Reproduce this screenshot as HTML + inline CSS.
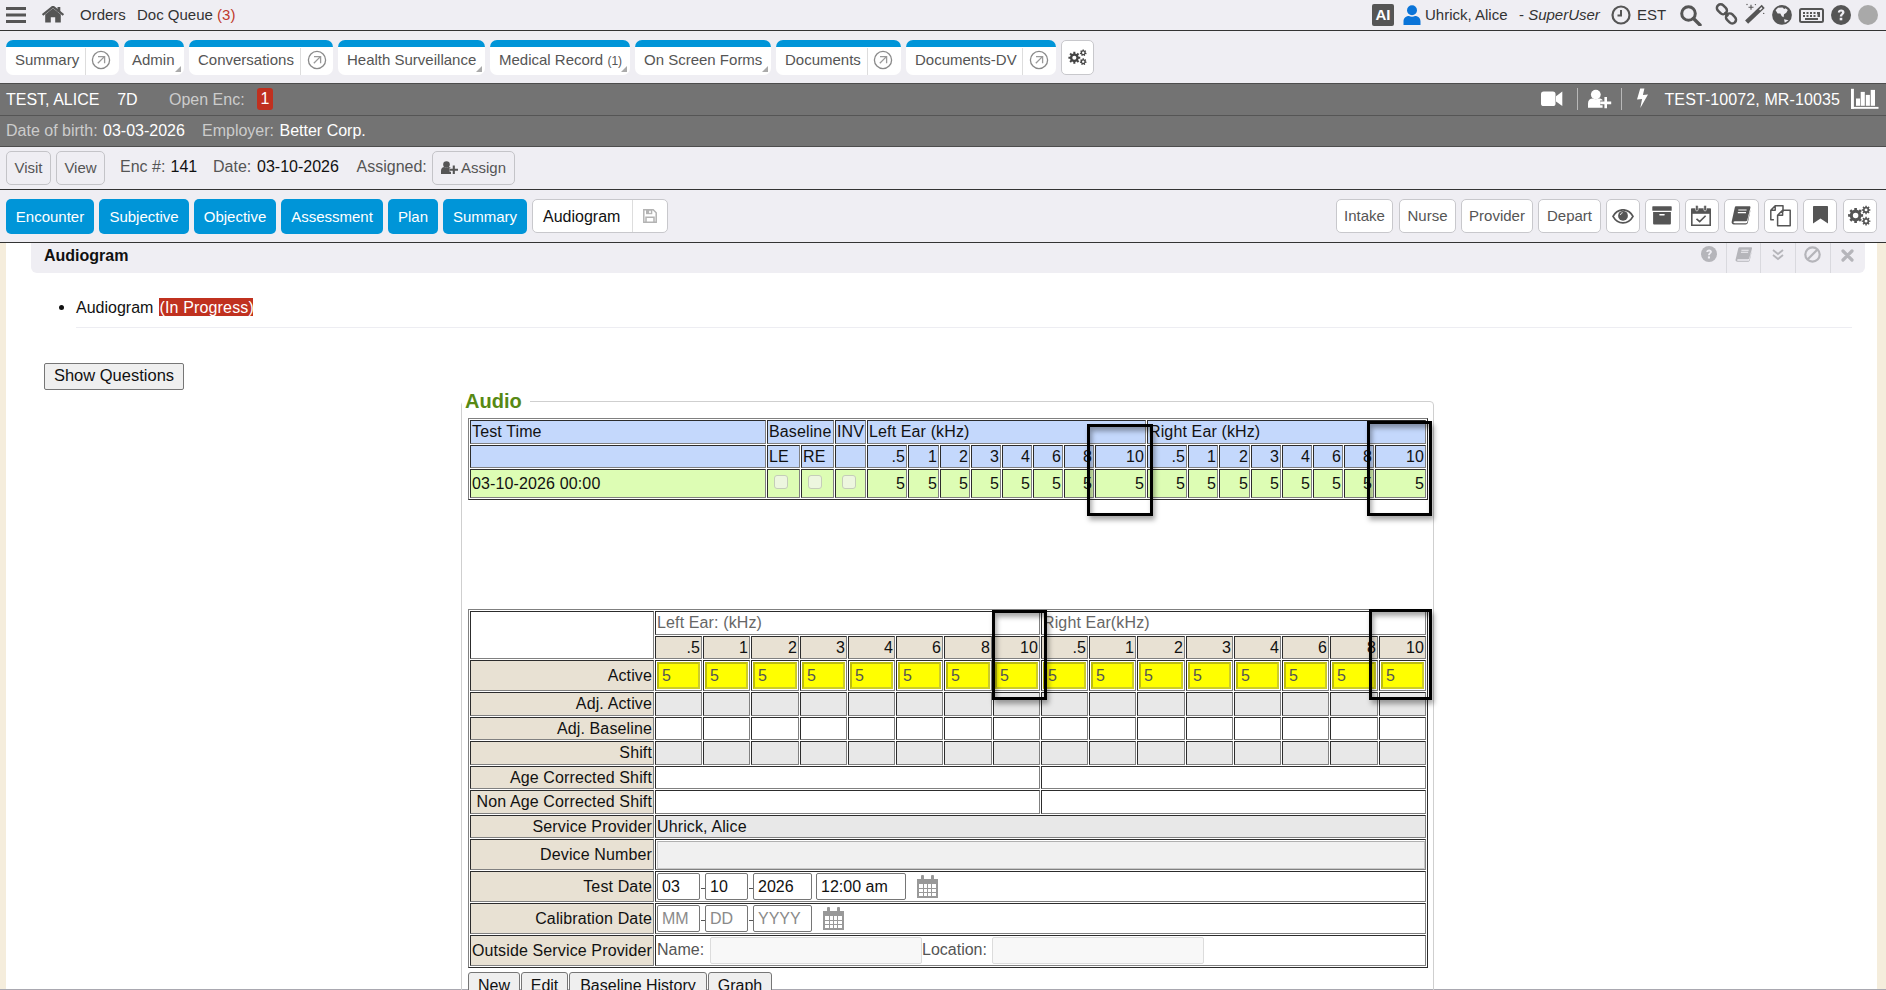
<!DOCTYPE html>
<html><head><meta charset="utf-8">
<style>
*{box-sizing:border-box}
html,body{margin:0;padding:0}
body{width:1886px;height:990px;overflow:hidden;position:relative;background:#fff;font-family:"Liberation Sans",sans-serif;color:#333}
.a{position:absolute}
svg{display:block}
#top{left:0;top:0;width:1886px;height:31px;background:#efeef3;border-bottom:1px solid #333}
.tt{font-size:15px;color:#333;white-space:nowrap;top:6px;line-height:17px}
#tabs{left:0;top:31px;width:1886px;height:52px;background:#efeef3}
.tab{top:40px;height:35px;background:#fff;border-top:7px solid #0095d8;border-radius:7px 7px 7px 7px;font-size:15px;color:#555;white-space:nowrap}
.tab .lbl{position:absolute;top:4px;line-height:17px}
.tab .dv{position:absolute;top:1px;bottom:0;width:1px;background:#ddd}
.tab .ar{position:absolute;top:6px;width:19px;height:19px;border:1.3px solid #888;border-radius:50%}
.tri{position:absolute;right:3px;bottom:3px;width:0;height:0;border-left:6px solid transparent;border-bottom:6px solid #aaa}
#pb{left:0;top:83px;width:1886px;height:64px;background:#737373;border-top:1px solid #4d4d4d;border-bottom:1px solid #4d4d4d}
#pbl{left:0;top:115px;width:1886px;height:1px;background:#555}
.pt{font-size:16px;white-space:nowrap;line-height:18px}
#vr{left:0;top:147px;width:1886px;height:43px;background:#efeef3;border-bottom:1px solid #333}
.btn{height:34px;border:1px solid #c4c4c8;border-radius:5px;background:#efeef3;font-size:15px;color:#555;text-align:center;line-height:32px;white-space:nowrap}
#nr{left:0;top:190px;width:1886px;height:53px;background:#efeef3;border-bottom:1px solid #333}
.nb{top:199px;height:35px;background:#0095d8;border-radius:5px;color:#fff;font-size:15px;text-align:center;line-height:35px;white-space:nowrap}
.gb{top:199px;height:34px;background:#fff;border:1px solid #c8c8cc;border-radius:5px;color:#555;font-size:15px;text-align:center;line-height:32px;white-space:nowrap}
</style><style>
.cl{display:flex;align-items:center;border-style:solid;border-width:1px;border-color:#2c2c2c #808080 #808080 #2c2c2c;padding:0 1px;font-size:16px;line-height:18px;white-space:nowrap;overflow:hidden;letter-spacing:0.13px}
.tb{border-style:solid;border-width:1px;border-color:#808080 #2c2c2c #2c2c2c #808080}
.cb{width:14px;height:14px;border:1px solid #c5cdb9;border-radius:3px;background:#edf6df}
.yin{background:#ff0;border:2px solid #cccc2a;border-top-color:#bcbc10;border-left-color:#bcbc10;font-size:16px;line-height:23px;color:#555;padding-left:3px}
.inp{background:#fff;border:1px solid #767676;border-radius:2px;font-size:16px;line-height:25px;padding-left:4px;white-space:nowrap}
.sbtn{height:30px;background:#efefef;border:1px solid #767676;border-radius:3px 3px 0 0;font-size:16px;line-height:25px;text-align:center;color:#111;padding-top:0}
.hb{border:3px solid #000;box-shadow:2px 4px 5px rgba(0,0,0,.35), inset 2px 4px 5px rgba(0,0,0,.35)}
</style></head><body>

<!-- TOP BAR -->
<div id="top" class="a"></div>
<svg class="a" style="left:6px;top:7px" width="20" height="16" viewBox="0 0 20 16"><rect x="0" y="0" width="20" height="3" fill="#555"/><rect x="0" y="6.5" width="20" height="3" fill="#555"/><rect x="0" y="13" width="20" height="3" fill="#555"/></svg>
<svg class="a" style="left:42px;top:6px" width="22" height="17" viewBox="0 0 22 17"><path d="M11 2.2 L3.2 8.6 V16.5 H8.8 V11.2 H13.2 V16.5 H18.8 V8.6 Z" fill="#555"/><path d="M0.6 9 L11 0.6 L21.4 9" stroke="#555" stroke-width="2.2" fill="none" stroke-linejoin="miter"/><rect x="15.5" y="1" width="2.8" height="5" fill="#555"/></svg>
<div class="a tt" style="left:80px">Orders</div>
<div class="a tt" style="left:137px">Doc Queue <span style="color:#c0392b">(3)</span></div>

<div class="a" style="left:1372px;top:4px;width:22px;height:22px;background:#555;border-radius:2px;color:#fff;font-weight:bold;font-size:15px;line-height:22px;text-align:center">AI</div>
<svg class="a" style="left:1403px;top:5px" width="18" height="20" viewBox="0 0 18 20"><circle cx="9" cy="5.2" r="5" fill="#0a74d8"/><path d="M0.5 20 V16.5 C0.5 12.5 3.5 11 6 11 C7.5 12 10.5 12 12 11 C14.5 11 17.5 12.5 17.5 16.5 V20 Z" fill="#0a74d8"/></svg>
<div class="a tt" style="left:1425px">Uhrick, Alice</div>
<div class="a tt" style="left:1519px">- <i>SuperUser</i></div>
<svg class="a" style="left:1611px;top:5px" width="20" height="20" viewBox="0 0 20 20"><circle cx="10" cy="10" r="8.5" fill="none" stroke="#555" stroke-width="2.2"/><path d="M10 5 V10.5 H6.5" fill="none" stroke="#555" stroke-width="2"/></svg>
<div class="a tt" style="left:1637px">EST</div>
<svg class="a" style="left:1680px;top:5px" width="22" height="21" viewBox="0 0 22 21"><circle cx="8.5" cy="8.5" r="6.8" fill="none" stroke="#555" stroke-width="3"/><path d="M13.5 13.5 L20 20" stroke="#555" stroke-width="3.4" stroke-linecap="round"/></svg>
<svg class="a" style="left:1716px;top:4px;overflow:visible" width="22" height="21" viewBox="0 0 22 21"><g fill="none" stroke="#555" stroke-width="2.5"><rect x="0.4" y="1.55" width="11" height="7.5" rx="3.7" transform="rotate(45 5.9 5.3)"/><rect x="9.5" y="10.65" width="11" height="7.5" rx="3.7" transform="rotate(45 15 14.4)"/></g><path d="M8.4 8.4 L12.3 12.2" stroke="#555" stroke-width="2"/></svg>
<svg class="a" style="left:1744px;top:3px" width="22" height="22" viewBox="0 0 22 22"><path d="M2.6 19.2 L19.2 3.4" stroke="#555" stroke-width="4.4" stroke-linecap="butt"/><path d="M15.6 7 L18 4.6" stroke="#efeef3" stroke-width="1.5"/><path d="M7 1.7 V6.7 M4.5 4.2 H9.5" stroke="#555" stroke-width="1.1"/><circle cx="3" cy="1.5" r="0.7" fill="#555"/><circle cx="11.4" cy="1.6" r="0.7" fill="#555"/><circle cx="19.7" cy="10.4" r="0.7" fill="#555"/></svg>
<svg class="a" style="left:1772px;top:5px" width="20" height="20" viewBox="0 0 20 20"><circle cx="10" cy="9.9" r="9.9" fill="#555"/><path d="M3.6 5.3 L6 2.7 L10.5 2.4 L12.2 3.9 L13.6 3.2 L15.8 5 L14.3 7.8 L12 9.2 L11.6 12.3 L9.8 11.2 L8.3 8.4 L5.6 8.4 Z" fill="#efeef3"/><path d="M12 14.2 L16.5 15.2 L12.8 17.8 Z" fill="#efeef3"/></svg>
<svg class="a" style="left:1799px;top:8px" width="25" height="15" viewBox="0 0 25 15"><rect x="1" y="1" width="23" height="13" rx="1.5" fill="none" stroke="#555" stroke-width="2"/><g fill="#555"><rect x="4" y="4" width="2" height="2"/><rect x="7.5" y="4" width="2" height="2"/><rect x="11" y="4" width="2" height="2"/><rect x="14.5" y="4" width="2" height="2"/><rect x="18" y="4" width="3" height="2"/><rect x="4" y="7" width="2" height="2"/><rect x="7.5" y="7" width="2" height="2"/><rect x="11" y="7" width="2" height="2"/><rect x="14.5" y="7" width="2" height="2"/><rect x="18.5" y="6" width="2.5" height="3"/><rect x="6" y="10" width="13" height="2"/></g></svg>
<svg class="a" style="left:1831px;top:5px" width="20" height="20" viewBox="0 0 20 20"><circle cx="10" cy="10" r="10" fill="#555"/><path d="M6.8 7.6 C6.8 5.6 8.3 4.5 10.2 4.5 C12.2 4.5 13.5 5.7 13.5 7.3 C13.5 9.5 11.2 9.6 11.2 11.6 H8.8 C8.8 8.7 11 8.6 11 7.4 C11 6.8 10.6 6.5 10.1 6.5 C9.5 6.5 9.1 6.9 9.1 7.6 Z" fill="#efeef3"/><rect x="8.7" y="12.8" width="2.6" height="2.5" fill="#efeef3"/></svg>
<div class="a" style="left:1858px;top:5px;width:20px;height:20px;border-radius:50%;background:#a9a9a9"></div>

<!-- TABS -->
<div id="tabs" class="a"></div>
<div class="a tab" style="left:6px;width:113px"><span class="lbl" style="left:9px">Summary</span><span class="dv" style="left:79px"></span></div>
<div class="a tab" style="left:124px;width:60px"><span class="lbl" style="left:8px">Admin</span><span class="tri"></span></div>
<div class="a tab" style="left:189px;width:144px"><span class="lbl" style="left:9px">Conversations</span><span class="dv" style="left:111px"></span></div>
<div class="a tab" style="left:338px;width:147px"><span class="lbl" style="left:9px">Health Surveillance</span><span class="tri"></span></div>
<div class="a tab" style="left:490px;width:140px"><span class="lbl" style="left:9px">Medical Record <span style="font-size:12px">(1)</span></span><span class="tri"></span></div>
<div class="a tab" style="left:635px;width:136px"><span class="lbl" style="left:9px">On Screen Forms</span><span class="tri"></span></div>
<div class="a tab" style="left:776px;width:125px"><span class="lbl" style="left:9px">Documents</span><span class="dv" style="left:91px"></span></div>
<div class="a tab" style="left:906px;width:150px"><span class="lbl" style="left:9px">Documents-DV</span><span class="dv" style="left:116px"></span></div>
<div class="a" style="left:1061px;top:40px;width:33px;height:35px;background:#fff;border:1px solid #c8c8cc;border-radius:5px"></div>

<!-- PATIENT BAR -->
<div id="pb" class="a"></div>
<div id="pbl" class="a"></div>
<div class="a pt" style="left:6px;top:91px;color:#fff">TEST, ALICE&nbsp;&nbsp;&nbsp;&nbsp;7D</div>
<div class="a pt" style="left:169px;top:91px;color:#ccc">Open Enc:</div>
<div class="a" style="left:257px;top:88px;width:16px;height:22px;background:#c0301f;border-radius:3px;color:#fff;font-size:16px;line-height:22px;text-align:center">1</div>
<div class="a pt" style="left:6px;top:122px;color:#ccc">Date of birth:</div><div class="a pt" style="left:103px;top:122px;color:#fff">03-03-2026</div><div class="a pt" style="left:202px;top:122px;color:#ccc">Employer:</div><div class="a pt" style="left:279.5px;top:122px;color:#fff">Better Corp.</div>
<div class="a pt" style="left:1664.5px;top:91px;color:#fff;letter-spacing:0.1px">TEST-10072, MR-10035</div>

<!-- VISIT ROW -->
<div id="vr" class="a"></div>
<div class="a btn" style="left:6px;top:151px;width:45px">Visit</div>
<div class="a btn" style="left:56px;top:151px;width:49px">View</div>
<div class="a pt" style="left:120px;top:158px;color:#555">Enc #:</div><div class="a pt" style="left:170.5px;top:158px;color:#111">141</div><div class="a pt" style="left:213px;top:158px;color:#555">Date:</div><div class="a pt" style="left:257px;top:158px;color:#111">03-10-2026</div><div class="a pt" style="left:356.5px;top:158px;color:#555">Assigned:</div>
<div class="a btn" style="left:432px;top:151px;width:83px;text-align:left;padding-left:28px">Assign</div>

<!-- NAV ROW -->
<div id="nr" class="a"></div>
<div class="a nb" style="left:6px;width:88px">Encounter</div>
<div class="a nb" style="left:99px;width:90px">Subjective</div>
<div class="a nb" style="left:194px;width:82px">Objective</div>
<div class="a nb" style="left:281px;width:102px">Assessment</div>
<div class="a nb" style="left:388px;width:50px">Plan</div>
<div class="a nb" style="left:443px;width:84px">Summary</div>
<div class="a gb" style="left:532px;width:136px;color:#111;text-align:left;padding-left:10px;font-size:16px;line-height:34px">Audiogram</div>
<div class="a" style="left:632px;top:200px;width:1px;height:32px;background:#ddd"></div>
<div class="a gb" style="left:1336px;width:57px">Intake</div>
<div class="a gb" style="left:1399px;width:57px">Nurse</div>
<div class="a gb" style="left:1461px;width:72px">Provider</div>
<div class="a gb" style="left:1538px;width:63px">Depart</div>
<div class="a gb" style="left:1606px;width:34px"></div>
<div class="a gb" style="left:1645px;width:35px"></div>
<div class="a gb" style="left:1685px;width:34px"></div>
<div class="a gb" style="left:1724px;width:35px"></div>
<div class="a gb" style="left:1764px;width:34px"></div>
<div class="a gb" style="left:1803px;width:34px"></div>
<div class="a gb" style="left:1843px;width:34px"></div>

<div class="a" style="left:0;top:243px;width:6px;height:747px;background:#f5eddc"></div>
<div class="a" style="left:1877px;top:243px;width:9px;height:747px;background:#f5eddc"></div>
<div class="a" style="left:0;top:989px;width:1886px;height:1px;background:#a9a8b0"></div>
<div class="a" style="left:31px;top:243px;width:1834px;height:30px;background:#efeef3;border-radius:0 0 6px 6px"></div>
<div class="a" style="left:44px;top:247px;font-size:16px;line-height:18px;font-weight:bold;color:#111;white-space:nowrap">Audiogram</div>
<div class="a" style="left:1726px;top:243px;width:1px;height:30px;background:#d9d9de"></div>
<div class="a" style="left:1760px;top:243px;width:1px;height:30px;background:#d9d9de"></div>
<div class="a" style="left:1795px;top:243px;width:1px;height:30px;background:#d9d9de"></div>
<div class="a" style="left:1830px;top:243px;width:1px;height:30px;background:#d9d9de"></div>
<svg class="a" style="left:1700.5px;top:246.3px" width="16" height="16" viewBox="0 0 16 16"><circle cx="8" cy="8" r="8" fill="#b5b5ba"/><path d="M5.3 6.1 C5.3 4.4 6.6 3.4 8.1 3.4 C9.8 3.4 10.9 4.4 10.9 5.8 C10.9 7.6 8.9 7.7 8.9 9.3 H7 C7 7 8.8 6.9 8.8 5.9 C8.8 5.4 8.5 5.2 8.1 5.2 C7.6 5.2 7.2 5.5 7.2 6.1 Z" fill="#efeef3"/><rect x="6.9" y="10.4" width="2.1" height="2.1" fill="#efeef3"/></svg>
<svg class="a" style="left:1735px;top:247px" width="17.5" height="15.2" viewBox="0 0 20 19" preserveAspectRatio="none"><path d="M5.2 0.3 H18.5 C19.3 0.3 19.6 1 19.4 1.8 L16.3 14 C16.1 14.8 15.5 15.2 14.7 15.2 H3.8 C2.6 15.2 2.2 16.2 2.6 16.8 C2.8 17.1 3.2 17.3 3.8 17.3 H14.6 C15.6 17.3 16.1 16.8 16.4 15.8 L19.5 3.8 V4.2 L16.9 16.6 C16.6 17.8 15.8 18.5 14.6 18.5 H2.9 C1.3 18.5 0.3 17.3 0.7 15.6 L3.8 1.6 C4 0.8 4.5 0.3 5.2 0.3 Z" fill="#b5b5ba"/><path d="M7.3 4 H15.6 M6.8 6.6 H15" stroke="#efeef3" stroke-width="1.2"/></svg>
<svg class="a" style="left:1772px;top:249px" width="12" height="12" viewBox="0 0 12 12"><path d="M1 1 L6 5 L11 1 M1 6 L6 10 L11 6" fill="none" stroke="#b5b5ba" stroke-width="1.8"/></svg>
<svg class="a" style="left:1804px;top:246px" width="17" height="17" viewBox="0 0 17 17"><circle cx="8.5" cy="8.5" r="7.2" fill="none" stroke="#b5b5ba" stroke-width="2.2"/><path d="M3.5 13.5 L13.5 3.5" stroke="#b5b5ba" stroke-width="2.2"/></svg>
<svg class="a" style="left:1841px;top:249px" width="13" height="13" viewBox="0 0 13 13"><path d="M2 2 L11 11 M11 2 L2 11" stroke="#b5b5ba" stroke-width="3.2" stroke-linecap="round"/></svg>
<div class="a" style="left:59px;top:305px;width:5px;height:5px;border-radius:50%;background:#111"></div>
<div class="a" style="left:76px;top:299px;font-size:16px;line-height:18px;color:#111;white-space:nowrap">Audiogram</div>
<div class="a" style="left:159px;top:298px;width:94px;height:18px;background:#c0311f;color:#fff;font-size:16px;line-height:20px;white-space:nowrap;text-align:left;letter-spacing:0.15px;padding-left:0.5px">(In Progress)</div>
<div class="a" style="left:76px;top:327px;width:1776px;height:1px;background:#ededf2"></div>
<div class="a" style="left:44px;top:363px;width:140px;height:27px;background:#efefef;border:1px solid #767676;border-radius:2px;font-size:16.5px;line-height:23px;text-align:center;color:#111;white-space:nowrap">Show Questions</div>
<div class="a" style="left:461px;top:401px;width:973px;height:620px;border:1px solid #cfcfcf;border-radius:4px"></div>
<div class="a" style="left:462px;top:386px;width:68px;height:24px;background:#fff"></div>
<div class="a" style="left:465px;top:390px;font-size:20px;line-height:23px;font-weight:bold;color:#578914;white-space:nowrap">Audio</div>
<!--TABLES-->
<svg class="a" style="left:91.4px;top:50.3px" width="20" height="20" viewBox="0 0 20 20"><circle cx="10" cy="10" r="8.6" fill="none" stroke="#8a8a8a" stroke-width="1.3"/><path d="M6.8 13.3 L13.2 6.9 M7 6.6 H13.6 V13.3" fill="none" stroke="#999" stroke-width="1.3"/></svg>
<svg class="a" style="left:306.5px;top:50.3px" width="20" height="20" viewBox="0 0 20 20"><circle cx="10" cy="10" r="8.6" fill="none" stroke="#8a8a8a" stroke-width="1.3"/><path d="M6.8 13.3 L13.2 6.9 M7 6.6 H13.6 V13.3" fill="none" stroke="#999" stroke-width="1.3"/></svg>
<svg class="a" style="left:873.3px;top:50.3px" width="20" height="20" viewBox="0 0 20 20"><circle cx="10" cy="10" r="8.6" fill="none" stroke="#8a8a8a" stroke-width="1.3"/><path d="M6.8 13.3 L13.2 6.9 M7 6.6 H13.6 V13.3" fill="none" stroke="#999" stroke-width="1.3"/></svg>
<svg class="a" style="left:1028.8px;top:50.3px" width="20" height="20" viewBox="0 0 20 20"><circle cx="10" cy="10" r="8.6" fill="none" stroke="#8a8a8a" stroke-width="1.3"/><path d="M6.8 13.3 L13.2 6.9 M7 6.6 H13.6 V13.3" fill="none" stroke="#999" stroke-width="1.3"/></svg>
<svg class="a" style="left:1068px;top:49px" width="19" height="16" viewBox="0 0 24 20.2"><path d="M6.76 5.54 L6.66 3.52 L9.34 3.52 L9.24 5.54 L10.98 6.26 L12.35 4.76 L14.24 6.65 L12.74 8.02 L13.46 9.76 L15.48 9.66 L15.48 12.34 L13.46 12.24 L12.74 13.98 L14.24 15.35 L12.35 17.24 L10.98 15.74 L9.24 16.46 L9.34 18.48 L6.66 18.48 L6.76 16.46 L5.02 15.74 L3.65 17.24 L1.76 15.35 L3.26 13.98 L2.54 12.24 L0.52 12.34 L0.52 9.66 L2.54 9.76 L3.26 8.02 L1.76 6.65 L3.65 4.76 L5.02 6.26 Z M10.60 11.00 A2.6 2.6 0 1 0 5.40 11.00 A2.6 2.6 0 1 0 10.60 11.00 Z M18.39 1.70 L18.34 0.59 L20.06 0.59 L20.01 1.70 L21.12 2.24 L21.96 1.50 L23.03 2.85 L22.13 3.50 L22.40 4.70 L23.50 4.90 L23.12 6.58 L22.04 6.28 L21.27 7.24 L21.80 8.22 L20.25 8.97 L19.81 7.94 L18.59 7.94 L18.15 8.97 L16.60 8.22 L17.13 7.24 L16.36 6.28 L15.28 6.58 L14.90 4.90 L16.00 4.70 L16.27 3.50 L15.37 2.85 L16.44 1.50 L17.28 2.24 Z M20.70 4.80 A1.5 1.5 0 1 0 17.70 4.80 A1.5 1.5 0 1 0 20.70 4.80 Z M18.39 12.90 L18.34 11.79 L20.06 11.79 L20.01 12.90 L21.12 13.44 L21.96 12.70 L23.03 14.05 L22.13 14.70 L22.40 15.90 L23.50 16.10 L23.12 17.78 L22.04 17.48 L21.27 18.44 L21.80 19.42 L20.25 20.17 L19.81 19.14 L18.59 19.14 L18.15 20.17 L16.60 19.42 L17.13 18.44 L16.36 17.48 L15.28 17.78 L14.90 16.10 L16.00 15.90 L16.27 14.70 L15.37 14.05 L16.44 12.70 L17.28 13.44 Z M20.70 16.00 A1.5 1.5 0 1 0 17.70 16.00 A1.5 1.5 0 1 0 20.70 16.00 Z" fill="#444" fill-rule="evenodd"/></svg>
<svg class="a" style="left:1541px;top:91px" width="22" height="16" viewBox="0 0 22 16"><rect x="0" y="0.4" width="14.5" height="14.6" rx="2.6" fill="#fff"/><path d="M15 5.2 L21.3 0.6 V15 L15 10.4 Z" fill="#fff"/></svg>
<div class="a" style="left:1577px;top:88px;width:1px;height:22px;background:#b8b8b8"></div>
<div class="a" style="left:1621px;top:88px;width:1px;height:22px;background:#b8b8b8"></div>
<svg class="a" style="left:1587px;top:89px" width="25" height="20" viewBox="0 0 25 20"><circle cx="8.8" cy="5.6" r="4.9" fill="#fff"/><path d="M1 18.8 V14.5 C1 11.5 3 9.6 5.5 9.6 C7.5 10.6 10 10.6 12.2 9.6 C13.6 9.6 14.8 10.2 15.6 11 V18.8 Z" fill="#fff"/><path d="M13.2 13.9 H24.2 M18.7 8.1 V19.2" stroke="#737373" stroke-width="4.8"/><path d="M13.2 13.9 H24.2 M18.7 8.1 V19.2" stroke="#fff" stroke-width="2.6"/></svg>
<svg class="a" style="left:1636px;top:88px" width="13" height="21" viewBox="0 0 13 21"><path d="M4.2 0.4 H8.4 L6.9 6.9 L12 6.5 L4.3 20 L6.1 11 L1 11.4 Z" fill="#fff"/></svg>
<svg class="a" style="left:1851px;top:88px" width="28" height="21" viewBox="0 0 28 21"><g fill="#fff"><rect x="0" y="0.8" width="2.9" height="20"/><rect x="0" y="18.9" width="27.5" height="1.9"/><rect x="5" y="10.5" width="4.1" height="7.3"/><rect x="9.7" y="3.9" width="4.1" height="13.9"/><rect x="14.8" y="6.9" width="4.1" height="10.9"/><rect x="19.7" y="1.9" width="4.3" height="15.9"/></g></svg>
<svg class="a" style="left:440px;top:160px" width="19" height="15" viewBox="0 0 19 15"><circle cx="6.5" cy="4.5" r="3.3" fill="#555"/><path d="M1 14 V10.8 C1 8.6 2.5 7 4.3 7 C5.6 7.8 7.4 7.8 8.7 7 C9.6 7 10.4 7.4 11 8 V14 Z" fill="#555"/><path d="M9.6 9.7 H18 M13.8 5.6 V14" stroke="#efeef3" stroke-width="4"/><path d="M9.6 9.7 H18 M13.8 5.6 V14" stroke="#555" stroke-width="2.1"/></svg>
<svg class="a" style="left:643px;top:209px" width="14" height="14" viewBox="0 0 14 14"><path d="M0.8 0.8 H10.2 L13.2 3.8 V13.2 H0.8 Z" fill="none" stroke="#b3b3b3" stroke-width="1.5"/><rect x="3" y="0.8" width="6.3" height="4.4" fill="#b3b3b3"/><rect x="6.2" y="1.8" width="1.6" height="2.3" fill="#fff"/><path d="M3 13 V8.3 H11 V13" fill="none" stroke="#b3b3b3" stroke-width="1.5"/></svg>
<svg class="a" style="left:1612px;top:209px" width="22" height="15" viewBox="0 0 22 15"><path d="M1 7.3 C3.5 2.8 7 0.8 11 0.8 C15 0.8 18.5 2.8 21 7.3 C18.5 11.8 15 13.8 11 13.8 C7 13.8 3.5 11.8 1 7.3 Z" fill="none" stroke="#555" stroke-width="1.7"/><circle cx="11" cy="6.8" r="4.9" fill="#555"/><path d="M8.5 6 C8.6 4.8 9.4 3.9 10.6 3.7" stroke="#fff" stroke-width="1" fill="none"/></svg>
<svg class="a" style="left:1652px;top:206px" width="20" height="19" viewBox="0 0 20 19"><rect x="0.3" y="0.3" width="19.4" height="4.5" rx="0.6" fill="#555"/><path d="M1.1 6 H18.9 V17.6 C18.9 18.2 18.5 18.5 18 18.5 H2 C1.5 18.5 1.1 18.2 1.1 17.6 Z" fill="#555"/><rect x="7.2" y="8" width="5.6" height="1.6" rx="0.8" fill="#fff"/></svg>
<svg class="a" style="left:1691px;top:205px" width="20" height="21" viewBox="0 0 20 21"><path d="M0.8 4.2 H19.2 V20.2 H0.8 Z" fill="none" stroke="#555" stroke-width="1.6"/><rect x="0.8" y="3.6" width="18.4" height="5.2" fill="#555"/><rect x="4.6" y="0.3" width="2.6" height="5.6" rx="1.3" fill="#555" stroke="#fff" stroke-width="0.6"/><rect x="12.8" y="0.3" width="2.6" height="5.6" rx="1.3" fill="#555" stroke="#fff" stroke-width="0.6"/><path d="M5.5 13.8 L8.7 16.6 L14.6 10.8" fill="none" stroke="#555" stroke-width="1.6"/></svg>
<svg class="a" style="left:1731px;top:206px" width="20" height="19" viewBox="0 0 20 19"><path d="M5.2 0.3 H18.5 C19.3 0.3 19.6 1 19.4 1.8 L16.3 14 C16.1 14.8 15.5 15.2 14.7 15.2 H3.8 C2.6 15.2 2.2 16.2 2.6 16.8 C2.8 17.1 3.2 17.3 3.8 17.3 H14.6 C15.6 17.3 16.1 16.8 16.4 15.8 L19.5 3.8 V4.2 L16.9 16.6 C16.6 17.8 15.8 18.5 14.6 18.5 H2.9 C1.3 18.5 0.3 17.3 0.7 15.6 L3.8 1.6 C4 0.8 4.5 0.3 5.2 0.3 Z" fill="#555"/><path d="M7.3 4 H15.6 M6.8 6.6 H15" stroke="#fff" stroke-width="1.1"/></svg>
<svg class="a" style="left:1770px;top:205px" width="22" height="22" viewBox="0 0 22 22"><path d="M5.2 0.8 H13 V6.7 M3.9 14.8 H0.8 V5.3 L5.2 0.8 V5.3 H0.8" fill="none" stroke="#555" stroke-width="1.5" stroke-linejoin="round"/><path d="M12.6 5.3 H20.2 V20.7 H7.6 V10.2 L12.6 5.3 V10.2 H7.6" fill="none" stroke="#555" stroke-width="1.5" stroke-linejoin="round"/></svg>
<svg class="a" style="left:1813px;top:206px" width="15" height="18" viewBox="0 0 15 18"><path d="M0 1 C0 0.4 0.4 0 1 0 H14 C14.6 0 15 0.4 15 1 V17.6 L7.5 12.6 L0 17.6 Z" fill="#555"/></svg>
<svg class="a" style="left:1848px;top:205px" width="23" height="21" viewBox="0 0 24.200 22.096"><path d="M6.62 4.95 L6.59 3.12 L9.41 3.12 L9.38 4.95 L11.30 5.75 L12.57 4.44 L14.56 6.43 L13.25 7.70 L14.05 9.62 L15.88 9.59 L15.88 12.41 L14.05 12.38 L13.25 14.30 L14.56 15.57 L12.57 17.56 L11.30 16.25 L9.38 17.05 L9.41 18.88 L6.59 18.88 L6.62 17.05 L4.70 16.25 L3.43 17.56 L1.44 15.57 L2.75 14.30 L1.95 12.38 L0.12 12.41 L0.12 9.59 L1.95 9.62 L2.75 7.70 L1.44 6.43 L3.43 4.44 L4.70 5.75 Z M10.90 11.00 A2.9 2.9 0 1 0 5.10 11.00 A2.9 2.9 0 1 0 10.90 11.00 Z M18.25 1.88 L18.19 0.67 L19.81 0.67 L19.75 1.88 L20.81 2.32 L21.63 1.43 L22.77 2.57 L21.88 3.39 L22.32 4.45 L23.53 4.39 L23.53 6.01 L22.32 5.95 L21.88 7.01 L22.77 7.83 L21.63 8.97 L20.81 8.08 L19.75 8.52 L19.81 9.73 L18.19 9.73 L18.25 8.52 L17.19 8.08 L16.37 8.97 L15.23 7.83 L16.12 7.01 L15.68 5.95 L14.47 6.01 L14.47 4.39 L15.68 4.45 L16.12 3.39 L15.23 2.57 L16.37 1.43 L17.19 2.32 Z M20.50 5.20 A1.5 1.5 0 1 0 17.50 5.20 A1.5 1.5 0 1 0 20.50 5.20 Z M18.25 13.68 L18.19 12.47 L19.81 12.47 L19.75 13.68 L20.81 14.12 L21.63 13.23 L22.77 14.37 L21.88 15.19 L22.32 16.25 L23.53 16.19 L23.53 17.81 L22.32 17.75 L21.88 18.81 L22.77 19.63 L21.63 20.77 L20.81 19.88 L19.75 20.32 L19.81 21.53 L18.19 21.53 L18.25 20.32 L17.19 19.88 L16.37 20.77 L15.23 19.63 L16.12 18.81 L15.68 17.75 L14.47 17.81 L14.47 16.19 L15.68 16.25 L16.12 15.19 L15.23 14.37 L16.37 13.23 L17.19 14.12 Z M20.50 17.00 A1.5 1.5 0 1 0 17.50 17.00 A1.5 1.5 0 1 0 20.50 17.00 Z" fill="#555" fill-rule="evenodd"/></svg>
<div class="a tb" style="left:468px;top:418px;width:960px;height:82px"></div>
<div class="a cl" style="left:470px;top:420px;width:296px;height:24px;background:#c4d8fc;justify-content:flex-start;color:#111;">Test Time</div>
<div class="a cl" style="left:767px;top:420px;width:67px;height:24px;background:#c4d8fc;justify-content:flex-start;color:#111;">Baseline</div>
<div class="a cl" style="left:835px;top:420px;width:31px;height:24px;background:#c4d8fc;justify-content:flex-start;color:#111;">INV</div>
<div class="a cl" style="left:867px;top:420px;width:279px;height:24px;background:#c4d8fc;justify-content:flex-start;color:#111;">Left Ear (kHz)</div>
<div class="a cl" style="left:1147px;top:420px;width:279px;height:24px;background:#c4d8fc;justify-content:flex-start;color:#111;">Right Ear (kHz)</div>
<div class="a cl" style="left:470px;top:445px;width:296px;height:23px;background:#c4d8fc;justify-content:flex-start;color:#111;"></div>
<div class="a cl" style="left:767px;top:445px;width:33px;height:23px;background:#c4d8fc;justify-content:flex-start;color:#111;">LE</div>
<div class="a cl" style="left:801px;top:445px;width:33px;height:23px;background:#c4d8fc;justify-content:flex-start;color:#111;">RE</div>
<div class="a cl" style="left:835px;top:445px;width:31px;height:23px;background:#c4d8fc;justify-content:flex-start;color:#111;"></div>
<div class="a cl" style="left:867px;top:445px;width:40px;height:23px;background:#c4d8fc;justify-content:flex-end;color:#111;">.5</div>
<div class="a cl" style="left:908px;top:445px;width:31px;height:23px;background:#c4d8fc;justify-content:flex-end;color:#111;">1</div>
<div class="a cl" style="left:940px;top:445px;width:30px;height:23px;background:#c4d8fc;justify-content:flex-end;color:#111;">2</div>
<div class="a cl" style="left:971px;top:445px;width:30px;height:23px;background:#c4d8fc;justify-content:flex-end;color:#111;">3</div>
<div class="a cl" style="left:1002px;top:445px;width:30px;height:23px;background:#c4d8fc;justify-content:flex-end;color:#111;">4</div>
<div class="a cl" style="left:1033px;top:445px;width:30px;height:23px;background:#c4d8fc;justify-content:flex-end;color:#111;">6</div>
<div class="a cl" style="left:1064px;top:445px;width:30px;height:23px;background:#c4d8fc;justify-content:flex-end;color:#111;">8</div>
<div class="a cl" style="left:1095px;top:445px;width:51px;height:23px;background:#c4d8fc;justify-content:flex-end;color:#111;">10</div>
<div class="a cl" style="left:1147px;top:445px;width:40px;height:23px;background:#c4d8fc;justify-content:flex-end;color:#111;">.5</div>
<div class="a cl" style="left:1188px;top:445px;width:30px;height:23px;background:#c4d8fc;justify-content:flex-end;color:#111;">1</div>
<div class="a cl" style="left:1219px;top:445px;width:31px;height:23px;background:#c4d8fc;justify-content:flex-end;color:#111;">2</div>
<div class="a cl" style="left:1251px;top:445px;width:30px;height:23px;background:#c4d8fc;justify-content:flex-end;color:#111;">3</div>
<div class="a cl" style="left:1282px;top:445px;width:30px;height:23px;background:#c4d8fc;justify-content:flex-end;color:#111;">4</div>
<div class="a cl" style="left:1313px;top:445px;width:30px;height:23px;background:#c4d8fc;justify-content:flex-end;color:#111;">6</div>
<div class="a cl" style="left:1344px;top:445px;width:30px;height:23px;background:#c4d8fc;justify-content:flex-end;color:#111;">8</div>
<div class="a cl" style="left:1375px;top:445px;width:51px;height:23px;background:#c4d8fc;justify-content:flex-end;color:#111;">10</div>
<div class="a cl" style="left:470px;top:469px;width:296px;height:29px;background:#ddfdb4;justify-content:flex-start;color:#111;">03-10-2026 00:00</div>
<div class="a cl" style="left:767px;top:469px;width:33px;height:29px;background:#ddfdb4;justify-content:flex-start;color:#111;"></div>
<div class="a cb" style="left:774px;top:475px"></div>
<div class="a cl" style="left:801px;top:469px;width:33px;height:29px;background:#ddfdb4;justify-content:flex-start;color:#111;"></div>
<div class="a cb" style="left:808px;top:475px"></div>
<div class="a cl" style="left:835px;top:469px;width:31px;height:29px;background:#ddfdb4;justify-content:flex-start;color:#111;"></div>
<div class="a cb" style="left:842px;top:475px"></div>
<div class="a cl" style="left:867px;top:469px;width:40px;height:29px;background:#ddfdb4;justify-content:flex-end;color:#111;">5</div>
<div class="a cl" style="left:908px;top:469px;width:31px;height:29px;background:#ddfdb4;justify-content:flex-end;color:#111;">5</div>
<div class="a cl" style="left:940px;top:469px;width:30px;height:29px;background:#ddfdb4;justify-content:flex-end;color:#111;">5</div>
<div class="a cl" style="left:971px;top:469px;width:30px;height:29px;background:#ddfdb4;justify-content:flex-end;color:#111;">5</div>
<div class="a cl" style="left:1002px;top:469px;width:30px;height:29px;background:#ddfdb4;justify-content:flex-end;color:#111;">5</div>
<div class="a cl" style="left:1033px;top:469px;width:30px;height:29px;background:#ddfdb4;justify-content:flex-end;color:#111;">5</div>
<div class="a cl" style="left:1064px;top:469px;width:30px;height:29px;background:#ddfdb4;justify-content:flex-end;color:#111;">5</div>
<div class="a cl" style="left:1095px;top:469px;width:51px;height:29px;background:#ddfdb4;justify-content:flex-end;color:#111;">5</div>
<div class="a cl" style="left:1147px;top:469px;width:40px;height:29px;background:#ddfdb4;justify-content:flex-end;color:#111;">5</div>
<div class="a cl" style="left:1188px;top:469px;width:30px;height:29px;background:#ddfdb4;justify-content:flex-end;color:#111;">5</div>
<div class="a cl" style="left:1219px;top:469px;width:31px;height:29px;background:#ddfdb4;justify-content:flex-end;color:#111;">5</div>
<div class="a cl" style="left:1251px;top:469px;width:30px;height:29px;background:#ddfdb4;justify-content:flex-end;color:#111;">5</div>
<div class="a cl" style="left:1282px;top:469px;width:30px;height:29px;background:#ddfdb4;justify-content:flex-end;color:#111;">5</div>
<div class="a cl" style="left:1313px;top:469px;width:30px;height:29px;background:#ddfdb4;justify-content:flex-end;color:#111;">5</div>
<div class="a cl" style="left:1344px;top:469px;width:30px;height:29px;background:#ddfdb4;justify-content:flex-end;color:#111;">5</div>
<div class="a cl" style="left:1375px;top:469px;width:51px;height:29px;background:#ddfdb4;justify-content:flex-end;color:#111;">5</div>
<div class="a tb" style="left:468px;top:609px;width:960px;height:359px"></div>
<div class="a cl" style="left:470px;top:611px;width:184px;height:48px;background:#fff;justify-content:flex-start;color:#111;"></div>
<div class="a cl" style="left:655px;top:611px;width:385px;height:24px;background:#fff;justify-content:flex-start;color:#666;">Left Ear: (kHz)</div>
<div class="a cl" style="left:1041px;top:611px;width:385px;height:24px;background:#fff;justify-content:flex-start;color:#666;">Right Ear(kHz)</div>
<div class="a cl" style="left:655px;top:636px;width:47px;height:23px;background:#e8e1d3;justify-content:flex-end;color:#111;">.5</div>
<div class="a cl" style="left:703px;top:636px;width:47px;height:23px;background:#e8e1d3;justify-content:flex-end;color:#111;">1</div>
<div class="a cl" style="left:751px;top:636px;width:48px;height:23px;background:#e8e1d3;justify-content:flex-end;color:#111;">2</div>
<div class="a cl" style="left:800px;top:636px;width:47px;height:23px;background:#e8e1d3;justify-content:flex-end;color:#111;">3</div>
<div class="a cl" style="left:848px;top:636px;width:47px;height:23px;background:#e8e1d3;justify-content:flex-end;color:#111;">4</div>
<div class="a cl" style="left:896px;top:636px;width:47px;height:23px;background:#e8e1d3;justify-content:flex-end;color:#111;">6</div>
<div class="a cl" style="left:944px;top:636px;width:48px;height:23px;background:#e8e1d3;justify-content:flex-end;color:#111;">8</div>
<div class="a cl" style="left:993px;top:636px;width:47px;height:23px;background:#e8e1d3;justify-content:flex-end;color:#111;">10</div>
<div class="a cl" style="left:1041px;top:636px;width:47px;height:23px;background:#e8e1d3;justify-content:flex-end;color:#111;">.5</div>
<div class="a cl" style="left:1089px;top:636px;width:47px;height:23px;background:#e8e1d3;justify-content:flex-end;color:#111;">1</div>
<div class="a cl" style="left:1137px;top:636px;width:48px;height:23px;background:#e8e1d3;justify-content:flex-end;color:#111;">2</div>
<div class="a cl" style="left:1186px;top:636px;width:47px;height:23px;background:#e8e1d3;justify-content:flex-end;color:#111;">3</div>
<div class="a cl" style="left:1234px;top:636px;width:47px;height:23px;background:#e8e1d3;justify-content:flex-end;color:#111;">4</div>
<div class="a cl" style="left:1282px;top:636px;width:47px;height:23px;background:#e8e1d3;justify-content:flex-end;color:#111;">6</div>
<div class="a cl" style="left:1330px;top:636px;width:48px;height:23px;background:#e8e1d3;justify-content:flex-end;color:#111;">8</div>
<div class="a cl" style="left:1379px;top:636px;width:47px;height:23px;background:#e8e1d3;justify-content:flex-end;color:#111;">10</div>
<div class="a cl" style="left:470px;top:660px;width:184px;height:31px;background:#e8e1d3;justify-content:flex-end;color:#111;">Active</div>
<div class="a cl" style="left:470px;top:692px;width:184px;height:24px;background:#e8e1d3;justify-content:flex-end;color:#111;">Adj. Active</div>
<div class="a cl" style="left:470px;top:717px;width:184px;height:23px;background:#e8e1d3;justify-content:flex-end;color:#111;">Adj. Baseline</div>
<div class="a cl" style="left:470px;top:741px;width:184px;height:24px;background:#e8e1d3;justify-content:flex-end;color:#111;">Shift</div>
<div class="a cl" style="left:470px;top:766px;width:184px;height:23px;background:#e8e1d3;justify-content:flex-end;color:#111;">Age Corrected Shift</div>
<div class="a cl" style="left:470px;top:790px;width:184px;height:24px;background:#e8e1d3;justify-content:flex-end;color:#111;">Non Age Corrected Shift</div>
<div class="a cl" style="left:470px;top:815px;width:184px;height:23px;background:#e8e1d3;justify-content:flex-end;color:#111;">Service Provider</div>
<div class="a cl" style="left:470px;top:839px;width:184px;height:31px;background:#e8e1d3;justify-content:flex-end;color:#111;">Device Number</div>
<div class="a cl" style="left:470px;top:871px;width:184px;height:31px;background:#e8e1d3;justify-content:flex-end;color:#111;">Test Date</div>
<div class="a cl" style="left:470px;top:903px;width:184px;height:31px;background:#e8e1d3;justify-content:flex-end;color:#111;">Calibration Date</div>
<div class="a cl" style="left:470px;top:935px;width:184px;height:31px;background:#e8e1d3;justify-content:flex-end;color:#111;">Outside Service Provider</div>
<div class="a cl" style="left:655px;top:660px;width:47px;height:31px;background:#fff;justify-content:flex-start;color:#111;"></div>
<div class="a yin" style="left:657px;top:662px;width:43px;height:27px">5</div>
<div class="a cl" style="left:655px;top:692px;width:47px;height:24px;background:#e8e8e8;justify-content:flex-start;color:#111;"></div>
<div class="a cl" style="left:655px;top:717px;width:47px;height:23px;background:#fff;justify-content:flex-start;color:#111;"></div>
<div class="a cl" style="left:655px;top:741px;width:47px;height:24px;background:#e8e8e8;justify-content:flex-start;color:#111;"></div>
<div class="a cl" style="left:703px;top:660px;width:47px;height:31px;background:#fff;justify-content:flex-start;color:#111;"></div>
<div class="a yin" style="left:705px;top:662px;width:43px;height:27px">5</div>
<div class="a cl" style="left:703px;top:692px;width:47px;height:24px;background:#e8e8e8;justify-content:flex-start;color:#111;"></div>
<div class="a cl" style="left:703px;top:717px;width:47px;height:23px;background:#fff;justify-content:flex-start;color:#111;"></div>
<div class="a cl" style="left:703px;top:741px;width:47px;height:24px;background:#e8e8e8;justify-content:flex-start;color:#111;"></div>
<div class="a cl" style="left:751px;top:660px;width:48px;height:31px;background:#fff;justify-content:flex-start;color:#111;"></div>
<div class="a yin" style="left:753px;top:662px;width:44px;height:27px">5</div>
<div class="a cl" style="left:751px;top:692px;width:48px;height:24px;background:#e8e8e8;justify-content:flex-start;color:#111;"></div>
<div class="a cl" style="left:751px;top:717px;width:48px;height:23px;background:#fff;justify-content:flex-start;color:#111;"></div>
<div class="a cl" style="left:751px;top:741px;width:48px;height:24px;background:#e8e8e8;justify-content:flex-start;color:#111;"></div>
<div class="a cl" style="left:800px;top:660px;width:47px;height:31px;background:#fff;justify-content:flex-start;color:#111;"></div>
<div class="a yin" style="left:802px;top:662px;width:43px;height:27px">5</div>
<div class="a cl" style="left:800px;top:692px;width:47px;height:24px;background:#e8e8e8;justify-content:flex-start;color:#111;"></div>
<div class="a cl" style="left:800px;top:717px;width:47px;height:23px;background:#fff;justify-content:flex-start;color:#111;"></div>
<div class="a cl" style="left:800px;top:741px;width:47px;height:24px;background:#e8e8e8;justify-content:flex-start;color:#111;"></div>
<div class="a cl" style="left:848px;top:660px;width:47px;height:31px;background:#fff;justify-content:flex-start;color:#111;"></div>
<div class="a yin" style="left:850px;top:662px;width:43px;height:27px">5</div>
<div class="a cl" style="left:848px;top:692px;width:47px;height:24px;background:#e8e8e8;justify-content:flex-start;color:#111;"></div>
<div class="a cl" style="left:848px;top:717px;width:47px;height:23px;background:#fff;justify-content:flex-start;color:#111;"></div>
<div class="a cl" style="left:848px;top:741px;width:47px;height:24px;background:#e8e8e8;justify-content:flex-start;color:#111;"></div>
<div class="a cl" style="left:896px;top:660px;width:47px;height:31px;background:#fff;justify-content:flex-start;color:#111;"></div>
<div class="a yin" style="left:898px;top:662px;width:43px;height:27px">5</div>
<div class="a cl" style="left:896px;top:692px;width:47px;height:24px;background:#e8e8e8;justify-content:flex-start;color:#111;"></div>
<div class="a cl" style="left:896px;top:717px;width:47px;height:23px;background:#fff;justify-content:flex-start;color:#111;"></div>
<div class="a cl" style="left:896px;top:741px;width:47px;height:24px;background:#e8e8e8;justify-content:flex-start;color:#111;"></div>
<div class="a cl" style="left:944px;top:660px;width:48px;height:31px;background:#fff;justify-content:flex-start;color:#111;"></div>
<div class="a yin" style="left:946px;top:662px;width:44px;height:27px">5</div>
<div class="a cl" style="left:944px;top:692px;width:48px;height:24px;background:#e8e8e8;justify-content:flex-start;color:#111;"></div>
<div class="a cl" style="left:944px;top:717px;width:48px;height:23px;background:#fff;justify-content:flex-start;color:#111;"></div>
<div class="a cl" style="left:944px;top:741px;width:48px;height:24px;background:#e8e8e8;justify-content:flex-start;color:#111;"></div>
<div class="a cl" style="left:993px;top:660px;width:47px;height:31px;background:#fff;justify-content:flex-start;color:#111;"></div>
<div class="a yin" style="left:995px;top:662px;width:43px;height:27px">5</div>
<div class="a cl" style="left:993px;top:692px;width:47px;height:24px;background:#e8e8e8;justify-content:flex-start;color:#111;"></div>
<div class="a cl" style="left:993px;top:717px;width:47px;height:23px;background:#fff;justify-content:flex-start;color:#111;"></div>
<div class="a cl" style="left:993px;top:741px;width:47px;height:24px;background:#e8e8e8;justify-content:flex-start;color:#111;"></div>
<div class="a cl" style="left:1041px;top:660px;width:47px;height:31px;background:#fff;justify-content:flex-start;color:#111;"></div>
<div class="a yin" style="left:1043px;top:662px;width:43px;height:27px">5</div>
<div class="a cl" style="left:1041px;top:692px;width:47px;height:24px;background:#e8e8e8;justify-content:flex-start;color:#111;"></div>
<div class="a cl" style="left:1041px;top:717px;width:47px;height:23px;background:#fff;justify-content:flex-start;color:#111;"></div>
<div class="a cl" style="left:1041px;top:741px;width:47px;height:24px;background:#e8e8e8;justify-content:flex-start;color:#111;"></div>
<div class="a cl" style="left:1089px;top:660px;width:47px;height:31px;background:#fff;justify-content:flex-start;color:#111;"></div>
<div class="a yin" style="left:1091px;top:662px;width:43px;height:27px">5</div>
<div class="a cl" style="left:1089px;top:692px;width:47px;height:24px;background:#e8e8e8;justify-content:flex-start;color:#111;"></div>
<div class="a cl" style="left:1089px;top:717px;width:47px;height:23px;background:#fff;justify-content:flex-start;color:#111;"></div>
<div class="a cl" style="left:1089px;top:741px;width:47px;height:24px;background:#e8e8e8;justify-content:flex-start;color:#111;"></div>
<div class="a cl" style="left:1137px;top:660px;width:48px;height:31px;background:#fff;justify-content:flex-start;color:#111;"></div>
<div class="a yin" style="left:1139px;top:662px;width:44px;height:27px">5</div>
<div class="a cl" style="left:1137px;top:692px;width:48px;height:24px;background:#e8e8e8;justify-content:flex-start;color:#111;"></div>
<div class="a cl" style="left:1137px;top:717px;width:48px;height:23px;background:#fff;justify-content:flex-start;color:#111;"></div>
<div class="a cl" style="left:1137px;top:741px;width:48px;height:24px;background:#e8e8e8;justify-content:flex-start;color:#111;"></div>
<div class="a cl" style="left:1186px;top:660px;width:47px;height:31px;background:#fff;justify-content:flex-start;color:#111;"></div>
<div class="a yin" style="left:1188px;top:662px;width:43px;height:27px">5</div>
<div class="a cl" style="left:1186px;top:692px;width:47px;height:24px;background:#e8e8e8;justify-content:flex-start;color:#111;"></div>
<div class="a cl" style="left:1186px;top:717px;width:47px;height:23px;background:#fff;justify-content:flex-start;color:#111;"></div>
<div class="a cl" style="left:1186px;top:741px;width:47px;height:24px;background:#e8e8e8;justify-content:flex-start;color:#111;"></div>
<div class="a cl" style="left:1234px;top:660px;width:47px;height:31px;background:#fff;justify-content:flex-start;color:#111;"></div>
<div class="a yin" style="left:1236px;top:662px;width:43px;height:27px">5</div>
<div class="a cl" style="left:1234px;top:692px;width:47px;height:24px;background:#e8e8e8;justify-content:flex-start;color:#111;"></div>
<div class="a cl" style="left:1234px;top:717px;width:47px;height:23px;background:#fff;justify-content:flex-start;color:#111;"></div>
<div class="a cl" style="left:1234px;top:741px;width:47px;height:24px;background:#e8e8e8;justify-content:flex-start;color:#111;"></div>
<div class="a cl" style="left:1282px;top:660px;width:47px;height:31px;background:#fff;justify-content:flex-start;color:#111;"></div>
<div class="a yin" style="left:1284px;top:662px;width:43px;height:27px">5</div>
<div class="a cl" style="left:1282px;top:692px;width:47px;height:24px;background:#e8e8e8;justify-content:flex-start;color:#111;"></div>
<div class="a cl" style="left:1282px;top:717px;width:47px;height:23px;background:#fff;justify-content:flex-start;color:#111;"></div>
<div class="a cl" style="left:1282px;top:741px;width:47px;height:24px;background:#e8e8e8;justify-content:flex-start;color:#111;"></div>
<div class="a cl" style="left:1330px;top:660px;width:48px;height:31px;background:#fff;justify-content:flex-start;color:#111;"></div>
<div class="a yin" style="left:1332px;top:662px;width:44px;height:27px">5</div>
<div class="a cl" style="left:1330px;top:692px;width:48px;height:24px;background:#e8e8e8;justify-content:flex-start;color:#111;"></div>
<div class="a cl" style="left:1330px;top:717px;width:48px;height:23px;background:#fff;justify-content:flex-start;color:#111;"></div>
<div class="a cl" style="left:1330px;top:741px;width:48px;height:24px;background:#e8e8e8;justify-content:flex-start;color:#111;"></div>
<div class="a cl" style="left:1379px;top:660px;width:47px;height:31px;background:#fff;justify-content:flex-start;color:#111;"></div>
<div class="a yin" style="left:1381px;top:662px;width:43px;height:27px">5</div>
<div class="a cl" style="left:1379px;top:692px;width:47px;height:24px;background:#e8e8e8;justify-content:flex-start;color:#111;"></div>
<div class="a cl" style="left:1379px;top:717px;width:47px;height:23px;background:#fff;justify-content:flex-start;color:#111;"></div>
<div class="a cl" style="left:1379px;top:741px;width:47px;height:24px;background:#e8e8e8;justify-content:flex-start;color:#111;"></div>
<div class="a cl" style="left:655px;top:766px;width:385px;height:23px;background:#fff;justify-content:flex-start;color:#111;"></div>
<div class="a cl" style="left:1041px;top:766px;width:385px;height:23px;background:#fff;justify-content:flex-start;color:#111;"></div>
<div class="a cl" style="left:655px;top:790px;width:385px;height:24px;background:#fff;justify-content:flex-start;color:#111;"></div>
<div class="a cl" style="left:1041px;top:790px;width:385px;height:24px;background:#fff;justify-content:flex-start;color:#111;"></div>
<div class="a cl" style="left:655px;top:815px;width:771px;height:23px;background:#e8e8e8;justify-content:flex-start;color:#111;">Uhrick, Alice</div>
<div class="a cl" style="left:655px;top:839px;width:771px;height:31px;background:#fff;justify-content:flex-start;color:#111;"></div>
<div class="a" style="left:657px;top:841px;width:768px;height:28px;background:#f0f0f0;border:1px solid #c8c8c8;border-top-color:#b0b0b0"></div>
<div class="a cl" style="left:655px;top:871px;width:771px;height:31px;background:#fff;justify-content:flex-start;color:#111;"></div>
<div class="a cl" style="left:655px;top:903px;width:771px;height:31px;background:#fff;justify-content:flex-start;color:#111;"></div>
<div class="a cl" style="left:655px;top:935px;width:771px;height:31px;background:#fff;justify-content:flex-start;color:#111;"></div>
<div class="a inp" style="left:657px;top:873px;width:43px;height:27px;color:#111">03</div>
<div class="a inp" style="left:705px;top:873px;width:43px;height:27px;color:#111">10</div>
<div class="a inp" style="left:753px;top:873px;width:59px;height:27px;color:#111">2026</div>
<div class="a inp" style="left:816px;top:873px;width:90px;height:27px;color:#111">12:00 am</div>
<div class="a inp" style="left:657px;top:905px;width:43px;height:27px;color:#8a8a8a">MM</div>
<div class="a inp" style="left:705px;top:905px;width:43px;height:27px;color:#8a8a8a">DD</div>
<div class="a inp" style="left:753px;top:905px;width:59px;height:27px;color:#8a8a8a">YYYY</div>
<div class="a" style="left:700.5px;top:888px;width:4px;height:1px;background:#555"></div>
<div class="a" style="left:748.5px;top:888px;width:4px;height:1px;background:#555"></div>
<div class="a" style="left:700.5px;top:920px;width:4px;height:1px;background:#555"></div>
<div class="a" style="left:748.5px;top:920px;width:4px;height:1px;background:#555"></div>
<svg class="a" style="left:917px;top:875px" width="21" height="23" viewBox="0 0 21 23"><g fill="#999"><rect x="4" y="0" width="3" height="5" rx="1"/><rect x="14" y="0" width="3" height="5" rx="1"/><path d="M0 4 H21 V23 H0 Z M2 9 V21 H19 V9 Z"/><path d="M2 13 H19 V14 H2 Z M2 17 H19 V18 H2 Z M6 9 H7 V21 H6 Z M10 9 H11 V21 H10 Z M14 9 H15 V21 H14 Z"/></g></svg>
<svg class="a" style="left:823px;top:907px" width="21" height="23" viewBox="0 0 21 23"><g fill="#999"><rect x="4" y="0" width="3" height="5" rx="1"/><rect x="14" y="0" width="3" height="5" rx="1"/><path d="M0 4 H21 V23 H0 Z M2 9 V21 H19 V9 Z"/><path d="M2 13 H19 V14 H2 Z M2 17 H19 V18 H2 Z M6 9 H7 V21 H6 Z M10 9 H11 V21 H10 Z M14 9 H15 V21 H14 Z"/></g></svg>
<div class="a" style="left:657px;top:941px;font-size:16px;line-height:18px;color:#555">Name:</div>
<div class="a" style="left:710px;top:937px;width:212px;height:27px;background:#f8f8f8;border:1px solid #dcdcdc;border-radius:2px"></div>
<div class="a" style="left:922px;top:941px;font-size:16px;line-height:18px;color:#555">Location:</div>
<div class="a" style="left:992px;top:937px;width:212px;height:27px;background:#f8f8f8;border:1px solid #dcdcdc;border-radius:2px"></div>
<div class="a sbtn" style="left:468px;top:972px;width:52px">New</div>
<div class="a sbtn" style="left:521px;top:972px;width:47px">Edit</div>
<div class="a sbtn" style="left:569px;top:972px;width:138px">Baseline History</div>
<div class="a sbtn" style="left:708px;top:972px;width:64px">Graph</div>
<div class="a hb" style="left:1087px;top:424px;width:66px;height:92px"></div>
<div class="a hb" style="left:1367px;top:421px;width:65px;height:95px"></div>
<div class="a hb" style="left:992px;top:610px;width:55px;height:90px"></div>
<div class="a hb" style="left:1369px;top:609px;width:63px;height:91px"></div>
</body></html>
